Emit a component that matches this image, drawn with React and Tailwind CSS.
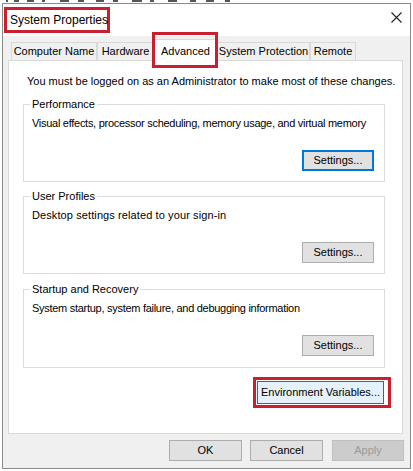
import React from "react";

const font = { fontFamily: '"Segoe UI", "Liberation Sans", Arial, sans-serif' };

const tabs = [
  ["Computer Name", "w-[86px]"],
  ["Hardware", "w-[57px]"],
  ["Advanced", "w-[63px]", true],
  ["System Protection", "w-[93px]"],
  ["Remote", "w-[46px]"],
];

function Btn({ children, className = "", disabled, focused }) {
  return (
    <button
      className={
        "flex items-center justify-center text-[11px] leading-none " +
        (disabled
          ? "border border-[#bfbfbf] bg-[#cccccc] text-[#9a9a9a] "
          : focused
          ? "border-2 border-[#0078d7] bg-[#e1e1e1] text-black "
          : "border border-[#adadad] bg-[#e1e1e1] text-black ") +
        className
      }
    >
      {children}
    </button>
  );
}

function Group({ label, text, textClass = "", focused, className = "" }) {
  return (
    <div className={"relative ml-[14px] flex w-[362px] flex-col border border-[#dcdcdc] " + className}>
      <span className="absolute left-[6px] top-[-8px] bg-white px-[2px] leading-[14px]">{label}</span>
      <p className={"whitespace-nowrap pl-[8px] pt-[11px] leading-[14px] " + textClass}>{text}</p>
      <div className="mr-[10px] flex justify-end">
        <Btn focused={focused} className="h-[21px] w-[72px]">Settings...</Btn>
      </div>
    </div>
  );
}

export default function App() {
  return (
    <div className="relative h-[471px] w-[413px] overflow-hidden bg-white text-[11px] text-black" style={font}>
      <div className="h-[3px] overflow-hidden">
        <svg width="413" height="3" viewBox="0 0 413 3">
          <g fill="#555">
            <rect x="6" y="0" width="2" height="2" />
            <rect x="14" y="0" width="5" height="2" />
            <rect x="27" y="0" width="7" height="2" />
            <rect x="42" y="0" width="3" height="2" />
            <rect x="60" y="0" width="9" height="2" />
            <rect x="78" y="0" width="6" height="2" />
            <rect x="96" y="0" width="8" height="2" />
            <rect x="113" y="0" width="5" height="2" />
            <rect x="132" y="0" width="10" height="2" />
            <rect x="150" y="0" width="4" height="2" />
            <rect x="168" y="0" width="9" height="2" />
            <rect x="190" y="0" width="6" height="2" />
            <rect x="206" y="0" width="8" height="2" />
            <rect x="225" y="0" width="5" height="2" />
          </g>
        </svg>
      </div>
      <div className="ml-[2px] flex h-[466px] w-[409px] flex-col border border-[#8a8a8a]">
        <div className="flex h-[32px] items-start justify-between bg-white">
          <span className="ml-[1px] mt-[3px] flex h-[26px] w-[106px] items-center whitespace-nowrap border-[3px] border-[#c8202e] pl-[3px] text-[12px]">
            System Properties
          </span>
          <svg className="mr-[8px] mt-[8px]" width="11" height="11" viewBox="0 0 11 11">
            <path d="M0.5 0.5 L10.5 10.5 M10.5 0.5 L0.5 10.5" stroke="#222" strokeWidth="1.1" />
          </svg>
        </div>
        <div className="flex flex-1 flex-col bg-[#f0f0f0] pl-[5px]">
          <div className="flex h-[24px] items-end pl-[3px]">
            {tabs.map(([name, w, active]) =>
              active ? (
                <div key={name} className={"relative z-10 -mb-px flex h-[22px] items-start justify-center border border-b-0 border-[#d9d9d9] bg-white pt-[3px] " + w}>
                  {name}
                  <span className="absolute left-[-3px] right-[-2px] top-[-8px] bottom-[-7px] border-[3px] border-[#c8202e]" />
                </div>
              ) : (
                <div key={name} className={"flex h-[18px] items-center justify-center whitespace-nowrap border border-b-0 border-[#d9d9d9] bg-[#f0f0f0] " + w}>
                  {name}
                </div>
              )
            )}
          </div>
          <div className="h-[374px] w-[395px] border border-[#d9d9d9] bg-white">
            <p className="whitespace-nowrap pl-[18px] pt-[13px] leading-[14px]">You must be logged on as an Administrator to make most of these changes.</p>
            <Group
              label="Performance"
              text="Visual effects, processor scheduling, memory usage, and virtual memory"
              textClass="tracking-[-0.28px]"
              focused
              className="mt-[16px] h-[78px] gap-[20px]"
            />
            <Group
              label="User Profiles"
              text="Desktop settings related to your sign-in"
              textClass="tracking-[0.1px]"
              className="mt-[14px] h-[78px] gap-[20px]"
            />
            <Group
              label="Startup and Recovery"
              text="System startup, system failure, and debugging information"
              textClass="tracking-[-0.28px]"
              className="mt-[15px] h-[79px] gap-[20px]"
            />
            <div className="mr-[18px] mt-[13px] flex justify-end">
              <div className="relative">
                <button className="flex h-[23px] w-[127px] items-center justify-center border border-[#0078d7] bg-[#e5f1fb] text-[11px] leading-none">
                  Environment Variables...
                </button>
                <span className="absolute left-[-4px] right-[-7px] top-[-4px] bottom-[-4px] border-[3px] border-[#c8202e]" />
              </div>
            </div>
          </div>
          <div className="mt-[6px] flex justify-end pr-[6px]">
            <Btn className="h-[21px] w-[73px]">OK</Btn>
            <Btn className="ml-[8px] h-[21px] w-[73px]">Cancel</Btn>
            <Btn className="ml-[9px] h-[21px] w-[72px]" disabled>Apply</Btn>
          </div>
        </div>
      </div>
    </div>
  );
}
